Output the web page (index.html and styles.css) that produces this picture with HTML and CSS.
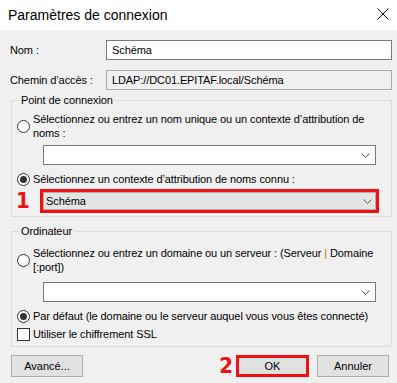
FILE: index.html
```html
<!doctype html>
<html lang="fr">
  <head>
    <meta charset="utf-8">
    <title>Paramètres de connexion</title>
    <link rel="stylesheet" href="styles.css">
  </head>
  <body>
    <div class="dialog">
      <header class="titlebar">
        <span class="title">Paramètres de connexion</span>
        <svg class="close" width="12" height="12" viewBox="0 0 12 12">
          <path d="M0.5 0.5 L11.5 11.5 M11.5 0.5 L0.5 11.5" stroke="#000" stroke-width="1" fill="none"/>
        </svg>
      </header>

      <div class="content">
        <div class="field">
          <label>Nom :</label>
          <div class="textbox">Schéma</div>
        </div>
        <div class="field">
          <label>Chemin d’accès :</label>
          <div class="textbox readonly">LDAP://DC01.EPITAF.local/Schéma</div>
        </div>

        <fieldset class="group group-point">
          <legend>Point de connexion</legend>
          <div class="option option-first">
            <span class="radio"></span>
            <span class="option-text">Sélectionnez ou entrez un nom unique ou un contexte d’attribution de noms :</span>
          </div>
          <div class="combo combo-first">
            <span class="combo-value"></span>
            <svg class="chevron" width="9" height="5" viewBox="0 0 9 5"><path d="M0.5 0.5 L4.5 4.5 L8.5 0.5" stroke="#555" fill="none"/></svg>
          </div>
          <div class="option option-second">
            <span class="radio checked"></span>
            <span class="option-text">Sélectionnez un contexte d’attribution de noms connu :</span>
          </div>
          <div class="marked-row">
            <span class="mark">1</span>
            <div class="highlight">
              <div class="combo combo-filled">
                <span class="combo-value">Schéma</span>
                <svg class="chevron" width="9" height="5" viewBox="0 0 9 5"><path d="M0.5 0.5 L4.5 4.5 L8.5 0.5" stroke="#555" fill="none"/></svg>
              </div>
            </div>
          </div>
        </fieldset>

        <fieldset class="group group-computer">
          <legend>Ordinateur</legend>
          <div class="option">
            <span class="radio"></span>
            <span class="option-text">Sélectionnez ou entrez un domaine ou un serveur : (Serveur <span class="pipe">|</span> Domaine [:port])</span>
          </div>
          <div class="combo combo-third">
            <span class="combo-value"></span>
            <svg class="chevron" width="9" height="5" viewBox="0 0 9 5"><path d="M0.5 0.5 L4.5 4.5 L8.5 0.5" stroke="#555" fill="none"/></svg>
          </div>
          <div class="option option-default">
            <span class="radio checked"></span>
            <span class="option-text">Par défaut (le domaine ou le serveur auquel vous vous êtes connecté)</span>
          </div>
          <div class="option option-ssl">
            <span class="checkbox"></span>
            <span class="option-text">Utiliser le chiffrement SSL</span>
          </div>
        </fieldset>

        <div class="buttons">
          <button class="btn">Avancé...</button>
          <span class="spacer"></span>
          <span class="mark mark-ok">2</span>
          <button class="btn btn-ok">OK</button>
          <button class="btn btn-cancel">Annuler</button>
        </div>
      </div>
    </div>
  </body>
</html>
```

FILE: styles.css
```css
* {
  box-sizing: border-box;
}

body {
  margin: 0;
  font-family: "Liberation Sans", Arial, sans-serif;
  font-size: 11px;
  letter-spacing: -0.1px;
  color: #000;
}

.dialog {
  width: 397px;
  height: 383px;
  background: #f0f0f0;
}

.titlebar {
  height: 30px;
  background: #fff;
  display: flex;
  align-items: center;
  justify-content: space-between;
  padding: 0 8px 0 8px;
}

.title {
  font-size: 14px;
  letter-spacing: 0;
}

.close {
  margin-top: -2px;
}

.content {
  padding: 10px 5px 0 10px;
}

.field {
  display: grid;
  grid-template-columns: 96px 1fr;
  align-items: center;
  margin-bottom: 10px;
}

.field:nth-child(2) {
  margin-bottom: 0;
}

.textbox {
  height: 20px;
  line-height: 18px;
  padding: 0 5px;
  background: #fff;
  border: 1px solid #7a7a7a;
}

.textbox.readonly {
  background: #f0f0f0;
  border-color: #adadad;
}

.group {
  margin: 0 0 0 1px;
  border: 1px solid #dcdcdc;
  padding: 0 5px;
  min-width: 0;
}

.group legend {
  margin-left: 2px;
  padding: 0 2px;
  line-height: 14px;
}

.group-point {
  margin-top: 3px;
  padding-top: 5px;
  padding-bottom: 3px;
}

.group-computer {
  margin-top: 7px;
  padding-top: 8px;
  padding-bottom: 5px;
}

.option {
  display: flex;
  align-items: center;
  line-height: 14px;
}

.option-text {
  flex: 1;
}

.pipe {
  color: #c07000;
}

.radio {
  width: 13px;
  height: 13px;
  border: 1px solid #333;
  border-radius: 50%;
  background: #fff;
  margin-right: 3px;
  flex: none;
  display: flex;
  align-items: center;
  justify-content: center;
}

.radio.checked::after {
  content: "";
  width: 7px;
  height: 7px;
  border-radius: 50%;
  background: #333;
}

.checkbox {
  width: 13px;
  height: 13px;
  border: 1px solid #333;
  background: #fff;
  margin-right: 3px;
  flex: none;
}

.combo {
  height: 20px;
  display: flex;
  align-items: center;
  justify-content: space-between;
  background: #fff;
  border: 1px solid #7a7a7a;
  padding: 0 5px 0 2px;
}

.combo-first,
.combo-third {
  margin: 5px 10px 0 26px;
}

.combo-third {
  margin-top: 8px;
}

.option-second {
  margin-top: 7px;
}

.option-default {
  margin-top: 7px;
}

.option-ssl {
  margin-top: 4px;
}

.marked-row {
  display: flex;
  align-items: center;
  margin-top: 3px;
}

.mark {
  width: 24px;
  margin-left: -1px;
  font-family: "DejaVu Sans Condensed", "Liberation Sans Narrow", sans-serif;
  font-weight: bold;
  font-size: 22px;
  line-height: 24px;
  letter-spacing: 0;
  color: #ee1111;
}

.highlight {
  flex: 1;
  margin-right: 7px;
  border: 3px solid #ee1111;
}

.combo-filled {
  height: 18px;
  background: #e5e5e5;
  border-color: #adadad;
  padding-right: 3px;
}

.buttons {
  display: flex;
  align-items: center;
  margin-top: 7px;
  padding-right: 3px;
}

.spacer {
  flex: 1;
}

.btn {
  width: 72px;
  height: 22px;
  margin: 0 0 0 1px;
  padding: 0;
  font: inherit;
  color: #000;
  background: #e1e1e1;
  border: 1px solid #adadad;
}

.btn-ok {
  width: 73px;
  margin: 0 8px 0 0;
  border: 3px solid #ee1111;
}

.btn-cancel {
  margin-left: 0;
}

.mark-ok {
  width: auto;
  margin: 0 3px 0 0;
}
```
